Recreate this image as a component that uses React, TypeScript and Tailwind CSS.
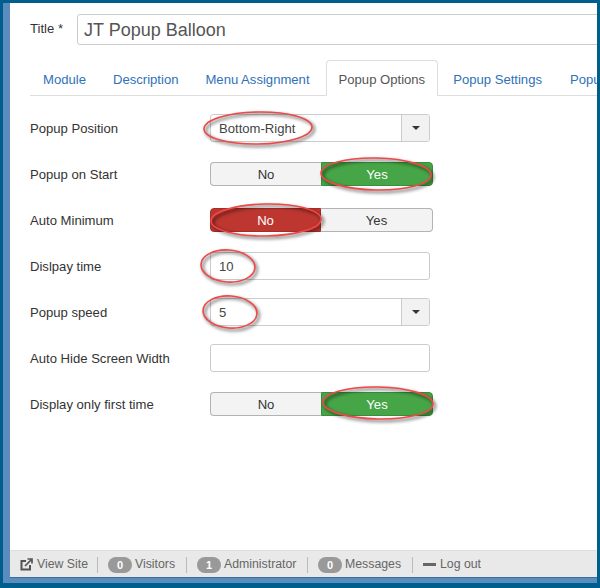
const font = { fontFamily: '"Liberation Sans", Arial, sans-serif' };

function Caret() {
  return <span className="w-0 h-0 border-x-[4px] border-x-transparent border-t-[4px] border-t-[#333]" />;
}

function Row({ label, children }: { label: string; children: React.ReactNode }) {
  return (
    <div className="flex items-center h-[28px] mb-[18px]">
      <label className="w-[180px] shrink-0 pt-[1px] text-[13.1px] text-[#333]">{label}</label>
      {children}
    </div>
  );
}

function Field({ value, caret }: { value?: string; caret?: boolean }) {
  return (
    <div className="flex w-[220px] h-[28px] rounded-[3px] border border-[#ccc] bg-white text-[13.1px] text-[#444]">
      <span className="flex-1 pl-[8px] leading-[27px]">{value}</span>
      {caret && (
        <span className="flex w-[28px] items-center justify-center border-l border-[#ccc] bg-[#f2f2f2] rounded-r-[3px]">
          <Caret />
        </span>
      )}
    </div>
  );
}

function Toggle({ value }: { value: "No" | "Yes" }) {
  return (
    <div className="flex w-[223px] h-[24px] text-[13.1px] leading-[23px] text-center text-[#333]">
      <span
        className={`w-[111px] rounded-l-[4px] border ${
          value === "No" ? "border-[#a32e29] bg-[#bd362f] text-white" : "border-[#b3b3b3] border-r-0 bg-[#f3f3f3]"
        }`}
      >
        No
      </span>
      <span
        className={`flex-1 rounded-r-[4px] border ${
          value === "Yes" ? "border-[#388e3c] bg-[#46a546] text-white" : "border-[#b3b3b3] border-l-0 bg-[#f3f3f3]"
        }`}
      >
        Yes
      </span>
    </div>
  );
}

function Badge({ n }: { n: number }) {
  return (
    <span className="mr-[3px] inline-block w-[24px] h-[16px] rounded-full bg-[#999] text-center text-[11px] font-bold leading-[16px] text-white">
      {n}
    </span>
  );
}

function Sep() {
  return <span className="mx-[10px] h-[16px] w-px bg-[#bbb]" />;
}

// the red hand-drawn circles on top of the screenshot: cx, cy, rx, ry, tilt
const marks = [
  [258, 128, 54, 16, -1],
  [376, 174, 55, 16, 1],
  [266, 220, 55, 16, -1],
  [228, 266, 27, 16, 4],
  [230, 312, 27, 16, 4],
  [378, 403, 55, 16, 1],
];

function Marks() {
  return (
    <svg className="absolute left-0 top-0" width="600" height="588" fill="none">
      <defs>
        <filter id="soft" x="-20%" y="-40%" width="140%" height="180%">
          <feGaussianBlur stdDeviation="1.6" />
        </filter>
      </defs>
      {marks.map(([cx, cy, rx, ry, tilt]) => (
        <g key={cx + cy} transform={`rotate(${tilt} ${cx} ${cy})`}>
          <ellipse cx={cx + 2} cy={cy + 2} rx={rx} ry={ry} stroke="#000" strokeOpacity="0.4" strokeWidth="3" filter="url(#soft)" />
          <ellipse cx={cx} cy={cy} rx={rx} ry={ry} stroke="#f04848" strokeWidth="1.6" />
        </g>
      ))}
    </svg>
  );
}

export default function App() {
  return (
    <div className="relative w-[600px] h-[588px] overflow-hidden bg-[#005e8e]" style={font}>
      <div className="flex flex-col h-[580px] mt-[3px] mx-[3px] border-l-[7px] border-b-[5px] border-l-[#5a8dbd] border-b-[#5a8dbd]">
        <main className="flex-1 overflow-hidden bg-white pl-[20px]">
          <div className="flex items-center mt-[11px] w-[600px]">
            <label className="w-[47px] text-[13.1px] text-[#333] -mt-[2px]">Title *</label>
            <div className="flex-1 h-[31px] rounded-[3px] border border-[#ccc] pl-[6px] text-[18px] leading-[30px] text-[#555]">
              JT Popup Balloon
            </div>
          </div>

          <nav className="mt-[15px] mb-[18px] flex h-[36px] w-[600px] whitespace-nowrap border-b border-[#ddd] text-[13.1px] text-[#3071b9]">
            <a className="pl-[13px] pr-[14px] pt-[10px]">Module</a>
            <a className="pl-[13px] pr-[14px] pt-[10px]">Description</a>
            <a className="pl-[13px] pr-[16px] pt-[10px]">Menu Assignment</a>
            <a className="h-[36px] rounded-t-[4px] border border-[#ddd] border-b-white bg-white px-[12px] pt-[9px] text-[#555]">
              Popup Options
            </a>
            <a className="pl-[15px] pr-[14px] pt-[10px]">Popup Settings</a>
            <a className="pl-[14px] pt-[10px]">Popu</a>
          </nav>

          <Row label="Popup Position">
            <Field value="Bottom-Right" caret />
          </Row>
          <Row label="Popup on Start">
            <Toggle value="Yes" />
          </Row>
          <Row label="Auto Minimum">
            <Toggle value="No" />
          </Row>
          <Row label="Dislpay time">
            <Field value="10" />
          </Row>
          <Row label="Popup speed">
            <Field value="5" caret />
          </Row>
          <Row label="Auto Hide Screen Width">
            <Field />
          </Row>
          <Row label="Display only first time">
            <Toggle value="Yes" />
          </Row>
        </main>

        <footer className="flex h-[28px] items-center whitespace-nowrap border-y border-t-[#ddd] border-b-[#3a6d9a] bg-[#e9e9e9] pl-[10px] pt-[1px] text-[12.3px] text-[#666]">
          <svg className="mr-[4px]" width="13" height="13" viewBox="0 0 13 13" fill="none" stroke="#555" strokeWidth="2">
            <path d="M6 3H1.5v8.5H10V7" />
            <path d="M5 8l6-6M7.5 1H12v4.5" strokeWidth="1.7" />
          </svg>
          <span className="w-[50px]">View Site</span>
          <Sep />
          <Badge n={0} />
          <span className="w-[41px]">Visitors</span>
          <Sep />
          <Badge n={1} />
          <span className="w-[73px]">Administrator</span>
          <Sep />
          <Badge n={0} />
          <span className="w-[57px]">Messages</span>
          <Sep />
          <span className="mr-[4px] h-[3px] w-[13px] bg-[#666]" />
          Log out
        </footer>
      </div>
      <Marks />
    </div>
  );
}
